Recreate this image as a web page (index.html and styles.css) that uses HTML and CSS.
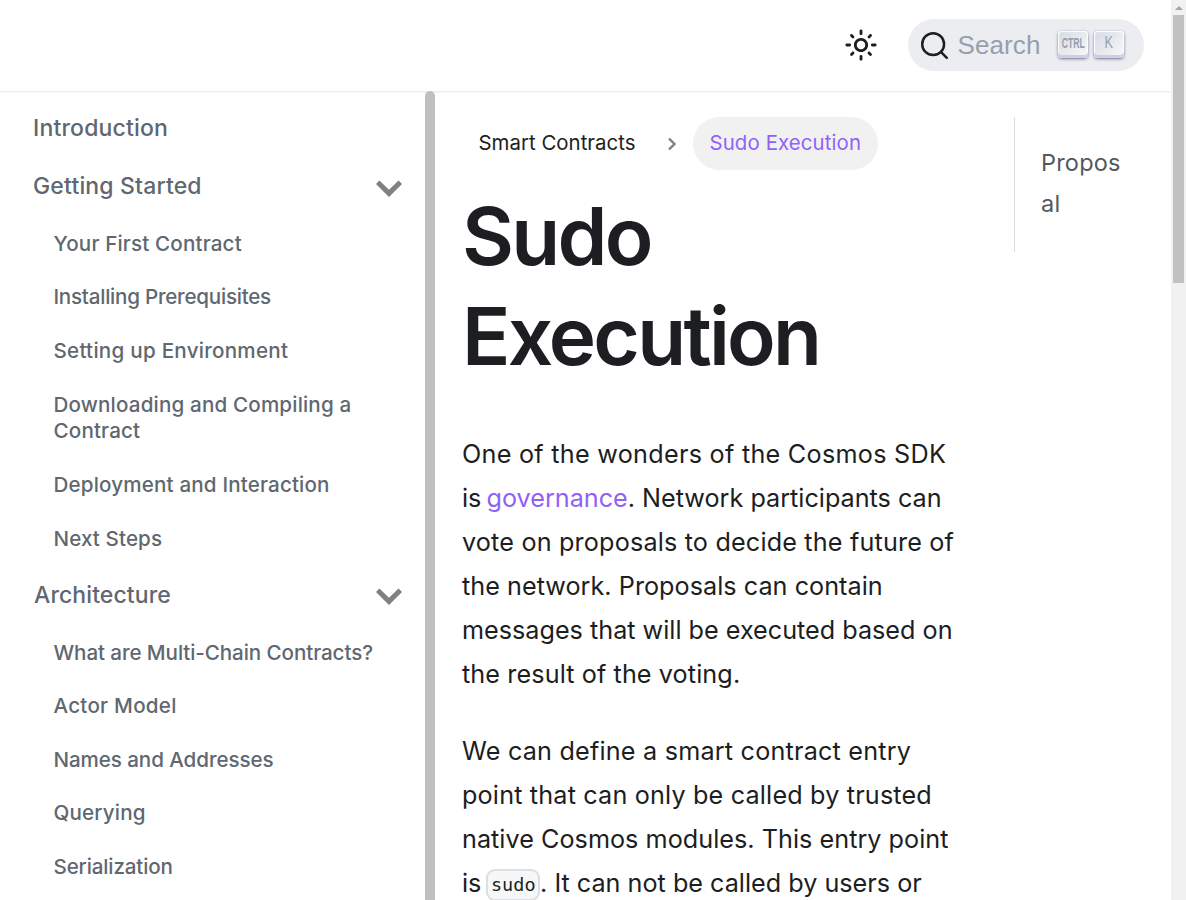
FILE: index.html
```html
<!DOCTYPE html>
<html lang="en">
<head>
<meta charset="utf-8">
<title>Sudo Execution</title>
<link rel="stylesheet" href="styles.css">
</head>
<body>
<div class="window">
  <div class="page">
    <header class="navbar">
      <button class="theme" aria-label="Switch theme">
        <svg width="34" height="34" viewBox="0 0 24 24"><path fill="currentColor" d="M12,9c1.65,0,3,1.35,3,3s-1.35,3-3,3s-3-1.35-3-3S10.35,9,12,9 M12,7c-2.76,0-5,2.24-5,5s2.24,5,5,5s5-2.24,5-5 S14.76,7,12,7L12,7z M2,13l2,0c0.55,0,1-0.45,1-1s-0.45-1-1-1l-2,0c-0.55,0-1,0.45-1,1S1.45,13,2,13z M20,13l2,0c0.55,0,1-0.45,1-1 s-0.45-1-1-1l-2,0c-0.55,0-1,0.45-1,1S19.45,13,20,13z M11,2v2c0,0.55,0.45,1,1,1s1-0.45,1-1V2c0-0.55-0.45-1-1-1S11,1.45,11,2z M11,20v2c0,0.55,0.45,1,1,1s1-0.45,1-1v-2c0-0.55-0.45-1-1-1C11.45,19,11,19.45,11,20z M5.99,4.58c-0.39-0.39-1.03-0.39-1.41,0 c-0.39,0.39-0.39,1.03,0,1.41l1.06,1.06c0.39,0.39,1.03,0.39,1.41,0s0.39-1.03,0-1.41L5.99,4.58z M18.36,16.95 c-0.39-0.39-1.03-0.39-1.41,0c-0.39,0.39-0.39,1.03,0,1.41l1.06,1.06c0.39,0.39,1.03,0.39,1.41,0c0.39-0.39,0.39-1.03,0-1.41 L18.36,16.95z M19.42,5.99c0.39-0.39,0.39-1.03,0-1.41c-0.39-0.39-1.03-0.39-1.41,0l-1.06,1.06c-0.39,0.39-0.39,1.03,0,1.41 s1.03,0.39,1.41,0L19.42,5.99z M7.05,18.36c0.39-0.39,0.39-1.03,0-1.41c-0.39-0.39-1.03-0.39-1.41,0l-1.06,1.06 c-0.39,0.39-0.39,1.03,0,1.41s1.03,0.39,1.41,0L7.05,18.36z"/></svg>
      </button>
      <button class="search">
        <svg class="search-icon" width="29" height="29" viewBox="0 0 20 20"><path d="M14.386 14.386l4.0877 4.0877-4.0877-4.0877c-2.9418 2.9419-7.7115 2.9419-10.6533 0-2.9419-2.9418-2.9419-7.7115 0-10.6533 2.9418-2.9419 7.7115-2.9419 10.6533 0 2.9419 2.9418 2.9419 7.7115 0 10.6533z" stroke="currentColor" fill="none" fill-rule="evenodd" stroke-width="1.7" stroke-linecap="round" stroke-linejoin="round"/></svg>
        <span class="search-label">Search</span>
        <span class="key"><span class="key-ctrl">CTRL</span></span>
        <span class="key"><span class="key-k">K</span></span>
      </button>
    </header>
    <div class="columns">
      <nav class="sidebar">
        <ul class="menu">
          <li><a class="top s2">Introduction</a></li>
          <li><a class="top s2">Getting Started<svg class="caret" width="26" height="17" viewBox="0 0 26 17"><path d="M1.7 2.2 13 13.4 24.3 2.2"/></svg></a>
            <ul class="sub">
              <li><a class="s2">Your First Contract</a></li>
              <li><a class="n3">Installing Prerequisites</a></li>
              <li><a class="s3">Setting up Environment</a></li>
              <li><a class="s2">Downloading and Compiling a Contract</a></li>
              <li><a class="s2">Deployment and Interaction</a></li>
              <li><a class="s1">Next Steps</a></li>
            </ul>
          </li>
          <li><a class="top s1 arch">Architecture<svg class="caret" width="26" height="17" viewBox="0 0 26 17"><path d="M1.7 2.2 13 13.4 24.3 2.2"/></svg></a>
            <ul class="sub">
              <li><a class="n1">What are Multi-Chain Contracts?</a></li>
              <li><a class="s3">Actor Model</a></li>
              <li><a class="n1">Names and Addresses</a></li>
              <li><a class="s2">Querying</a></li>
              <li><a class="n2">Serialization</a></li>
            </ul>
          </li>
        </ul>
        <div class="side-scroll"></div>
      </nav>
      <main class="content">
        <div class="crumbs">
          <a class="crumb">Smart Contracts</a>
          <svg class="crumb-sep" width="10" height="14" viewBox="0 0 10 14"><path d="M2 1.5 7.5 7 2 12.5"/></svg>
          <span class="crumb current">Sudo Execution</span>
        </div>
        <h1>Sudo Execution</h1>
        <p><span class="b5">One of the wonders of the Cosmos SDK</span><br><span class="b0"><span class="tight">is </span><a class="link">governance</a>. Network participants can</span><br><span class="b3">vote on proposals to decide the future of</span><br><span class="b1">the network. Proposals can contain</span><br><span class="b0">messages that will be executed based on</span><br><span class="b2">the result of the voting.</span></p>
        <p><span class="b4">We can define a smart contract entry</span><br><span class="b3">point that can only be called by trusted</span><br><span class="b1">native Cosmos modules. This entry point</span><br><span class="b0"><span class="tight">is </span><code>sudo</code></span><span class="b0">. It can not be called by users or</span></p>
      </main>
      <aside class="toc"><a>Proposal</a></aside>
    </div>
  </div>
  <div class="scrollbar"><i class="up"></i><i class="thumb"></i></div>
</div>
</body>
</html>
```
FILE: styles.css
```css
* { box-sizing: border-box; }
body { margin: 0; background: #fff; font-family: Inter, "Open Sans", sans-serif; color: #1c1e21; overflow: hidden; }
ul { list-style: none; margin: 0; padding: 0; }
button { border: 0; background: none; padding: 0; font: inherit; color: #1c1e21; }
svg { display: block; flex: none; }

.window { display: flex; width: 1186px; height: 900px; overflow: hidden; }
.page { width: 1171px; display: flex; flex-direction: column; }

.navbar { height: 91px; flex: none; display: flex; align-items: center; justify-content: flex-end; padding-right: 27px; gap: 30px; box-shadow: 0 1px 2px rgba(0, 0, 0, .1); }
.theme { margin-top: -1px; }
.search { width: 236px; height: 52px; border-radius: 26px; background: #ebedf0; display: flex; align-items: center; padding-left: 12px; margin-top: -1px; }
.search-label { font: 26px/30px "Liberation Sans", Arial, sans-serif; color: #969faf; width: 84px; margin: 0 17px 0 8px; letter-spacing: .1px; white-space: nowrap; }
.search-icon { margin-top: 1px; }
.key { width: 30px; height: 27px; margin-right: 6px; margin-top: -2px; padding-bottom: 3px; border-radius: 4px; display: flex; align-items: center; justify-content: center; background: linear-gradient(-225deg, #d5dbe4, #f8f8f8); box-shadow: inset 0 -3px 0 0 #cdcde6, inset 0 0 1px 1px #fff, 0 1px 3px 0 rgba(30, 35, 90, .6); color: #969faf; }
.key-ctrl { font: 700 14.5px/20px "Liberation Sans", Arial, sans-serif; transform: scaleX(.6); }
.key-k { font: 17px/20px "Liberation Sans", Arial, sans-serif; transform: scaleX(.75); }

.columns { flex: 1; min-height: 0; display: flex; }

.sidebar { width: 435px; display: flex; overflow: hidden; }
.menu { flex: 1; padding: 8px 23px 0 33px; color: #606770; }
.menu a { display: flex; align-items: center; }
.menu .top { height: 58px; font-size: 23px; font-weight: 460; justify-content: space-between; }
.menu .arch { padding-left: 1px; }
.menu .sub { padding: 2.5px 20px 0 20.5px; }
.sub a { font-size: 20.6px; line-height: 26.8px; padding: 13.4px 0; font-weight: 460; margin-right: -20px; }
.n3 { letter-spacing: -.24px; }
.n2 { letter-spacing: -.14px; }
.n1 { letter-spacing: -.08px; }
.s1 { letter-spacing: .1px; }
.s2 { letter-spacing: .17px; }
.s3 { letter-spacing: .26px; }
.caret { fill: none; stroke: gray; stroke-width: 5; margin-top: 4px; }
.side-scroll { width: 10px; background: #c0c0c0; border-radius: 5px 5px 0 0; }

.content { width: 553px; padding: 26px 26px 0 27px; overflow: hidden; }
.crumbs { display: flex; align-items: center; height: 53px; }
.crumb { font-size: 20.4px; line-height: 51px; padding: 0 16.5px 2px; border-radius: 27px; letter-spacing: .02px; white-space: nowrap; }
.crumb.current { width: 185px; background: #f1f1f1; color: #9161f7; letter-spacing: .12px; margin-left: 16px; }
.crumb-sep { fill: none; stroke: #7f7f7f; stroke-width: 2.4; margin-left: 15px; }
h1 { margin: 16px 0 46px; font-size: 80px; line-height: 100px; font-weight: 600; letter-spacing: -2.75px; }
p { margin: 0 -20px 33px 0; font-size: 25.2px; line-height: 44px; white-space: nowrap; }
.link { color: #9161f7; }
.tight { word-spacing: -2px; }
.b0 { letter-spacing: 0; }
.b1 { letter-spacing: .03px; }
.b2 { letter-spacing: .1px; }
.b3 { letter-spacing: .17px; }
.b4 { letter-spacing: .2px; }
.b5 { letter-spacing: .27px; }
code { font: 18.5px/28px "DejaVu Sans Mono", monospace; display: inline-block; padding: 0 2.5px; border: 2px solid #dddee0; border-radius: 9px; background: #f6f7f8; position: relative; top: -1px; }

.toc { width: 110px; height: 135px; margin: 26px 0 0 26px; border-left: 1px solid #dadde1; padding: 25px 0 0 26px; font-size: 23.5px; line-height: 41px; color: #525860; letter-spacing: .2px; word-break: break-all; }

.scrollbar { width: 15px; background: #f1f1f1; display: flex; flex-direction: column; align-items: center; }
.up { height: 4px; border: 4px solid transparent; border-top: 0; border-bottom: 4px solid #a3a3a3; margin-top: 6px; }
.thumb { width: 11px; height: 268px; background: #c1c1c1; margin-top: 5px; }
```
